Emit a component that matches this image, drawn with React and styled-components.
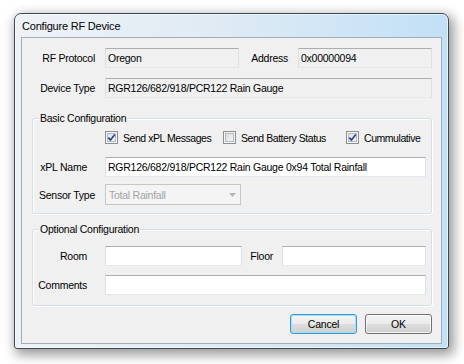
import React from 'react';
import styled, { createGlobalStyle, css } from 'styled-components';

const Global = createGlobalStyle`
  html, body { margin: 0; padding: 0; background: #fff; }
  body {
    width: 464px; height: 364px; overflow: hidden;
    font-family: "Liberation Sans", Arial, sans-serif;
    font-size: 10.5px; letter-spacing: -0.25px; color: #000;
  }
  * { box-sizing: border-box; }
`;

const Page = styled.div`
  padding: 13px 0 0 14px;
`;

const Window = styled.div`
  width: 435px;
  height: 336px;
  border: 1px solid #3b4957;
  border-radius: 7px 7px 3px 3px;
  background: linear-gradient(90deg, #eef2f6 0%, #e0ebf4 45%, #c2e0f6 100%);
  box-shadow: inset 0 0 0 1px rgba(255, 255, 255, 0.6), 3px 4px 12px 2px rgba(0, 0, 0, 0.4);
  display: flex;
  flex-direction: column;
  padding: 0 6px 4px 6px;
`;

const TitleBar = styled.div`
  height: 23px;
  display: flex;
  align-items: center;
  padding-left: 1px;
  font-size: 11px;
  letter-spacing: -0.2px;
  color: #000;
`;

const Client = styled.div`
  height: 307px;
  border: 1px solid #a2adb9;
  background: #f0f0f0;
  padding: 0 9px 0 10px;
  display: flex;
  flex-direction: column;
`;

const Row = styled.div`
  display: flex;
  align-items: center;
  height: ${p => p.$h || 20}px;
  margin-top: ${p => p.$mt || 0}px;
`;

const LabelCell = styled.div`
  width: ${p => p.$w}px;
  flex: none;
  text-align: right;
  padding-right: ${p => p.$pad}px;
  white-space: nowrap;
`;

const Field = styled.div`
  height: 20px;
  ${p => (p.$w ? css`width: ${p.$w}px; flex: none;` : css`flex: 1;`)}
  border: 1px solid #dbdfe6;
  border-top-color: #abadb3;
  border-bottom-color: #e3e9ef;
  background: ${p => (p.$readonly ? '#f0f0f0' : '#fff')};
  padding-left: 2px;
  display: flex;
  align-items: center;
  white-space: nowrap;
  overflow: hidden;
`;

const Group = styled.div`
  position: relative;
  height: ${p => p.$h}px;
  margin-top: ${p => p.$mt}px;
  border: 1px solid #d5dfe5;
  border-radius: 3px;
  box-shadow: inset 1px 1px 0 #fff, 1px 1px 0 #fff;
  display: flex;
  flex-direction: column;
`;

const Legend = styled.span`
  position: absolute;
  top: -7px;
  left: 6px;
  padding: 0 1px;
  line-height: 13px;
  background: #f0f0f0;
`;

const CheckRow = styled.div`
  display: grid;
  grid-template-columns: 118px 123px auto;
  align-items: center;
  height: 13px;
  margin-top: 12px;
  padding-left: 72px;
`;

const CheckItem = styled.label`
  display: flex;
  align-items: center;
  gap: 5px;
  white-space: nowrap;
  letter-spacing: -0.45px;
`;

const Box = styled.span`
  width: 13px;
  height: 13px;
  flex: none;
  border: 1px solid #8e8f8f;
  background: ${p =>
    p.$checked
      ? 'linear-gradient(135deg, #d6deeb 0%, #eaeef5 60%, #fbfcfd 100%)'
      : 'linear-gradient(135deg, #d2d4d8 0%, #ebecee 60%, #fafafa 100%)'};
  box-shadow: inset 0 0 0 1px #f5f5f5, inset 0 0 0 2px #b6bbc2;
  display: flex;
  align-items: center;
  justify-content: center;
`;

const Combo = styled.div`
  width: 136px;
  height: 21px;
  border: 1px solid #c4c8cd;
  background: #f4f4f4;
  color: #a3a3a3;
  padding-left: 3px;
  padding-right: 4px;
  display: flex;
  align-items: center;
  justify-content: space-between;
`;

const ButtonRow = styled.div`
  display: flex;
  justify-content: flex-end;
  gap: 8px;
  margin-top: 8px;
`;

const Button = styled.button`
  width: 67px;
  height: 20px;
  font: inherit;
  letter-spacing: -0.2px;
  color: #000;
  border-radius: 3px;
  border: 1px solid ${p => (p.$default ? '#3c94d6' : '#707070')};
  background: linear-gradient(180deg, #f3f3f3 0%, #ebebeb 48%, #dddddd 52%, #cfcfcf 100%);
  box-shadow: inset 0 0 0 1px ${p => (p.$default ? '#9ee4fa' : 'rgba(255,255,255,0.75)')};
  padding: 0;
`;

function Checkbox({ checked, children }) {
  return (
    <CheckItem>
      <Box $checked={checked}>
        {checked && (
          <svg width="9" height="9" viewBox="0 0 9 9">
            <path d="M1.3 4.6 L3.5 7 L7.8 1.4" fill="none" stroke="#2a3f8f" strokeWidth="1.6" />
          </svg>
        )}
      </Box>
      {children}
    </CheckItem>
  );
}

export default function App() {
  return (
    <Page>
      <Global />
      <Window>
        <TitleBar>Configure RF Device</TitleBar>
        <Client>
          <Row $mt={10}>
            <LabelCell $w={73} $pad={10}>RF Protocol</LabelCell>
            <Field $w={134} $readonly>Oregon</Field>
            <LabelCell $w={59} $pad={10}>Address</LabelCell>
            <Field $readonly>0x00000094</Field>
          </Row>
          <Row $mt={10}>
            <LabelCell $w={73} $pad={10}>Device Type</LabelCell>
            <Field $readonly>RGR126/682/918/PCR122 Rain Gauge</Field>
          </Row>

          <Group $mt={20} $h={96}>
            <Legend>Basic Configuration</Legend>
            <CheckRow>
              <Checkbox checked>Send xPL Messages</Checkbox>
              <Checkbox>Send Battery Status</Checkbox>
              <Checkbox checked>Cummulative</Checkbox>
            </CheckRow>
            <Row $mt={13}>
              <LabelCell $w={72} $pad={18}>xPL Name</LabelCell>
              <Field $w={321}>RGR126/682/918/PCR122 Rain Gauge 0x94 Total Rainfall</Field>
            </Row>
            <Row $mt={7} $h={21}>
              <LabelCell $w={72} $pad={10}>Sensor Type</LabelCell>
              <Combo>
                <span>Total Rainfall</span>
                <svg width="7" height="4" viewBox="0 0 7 4">
                  <path d="M0 0 H7 L3.5 4 Z" fill="#b4b4b4" />
                </svg>
              </Combo>
            </Row>
          </Group>

          <Group $mt={15} $h={77}>
            <Legend>Optional Configuration</Legend>
            <Row $mt={16}>
              <LabelCell $w={72} $pad={18}>Room</LabelCell>
              <Field $w={137} />
              <LabelCell $w={40} $pad={9}>Floor</LabelCell>
              <Field $w={144} />
            </Row>
            <Row $mt={9}>
              <LabelCell $w={72} $pad={18}>Comments</LabelCell>
              <Field $w={321} />
            </Row>
          </Group>

          <ButtonRow>
            <Button $default>Cancel</Button>
            <Button>OK</Button>
          </ButtonRow>
        </Client>
      </Window>
    </Page>
  );
}
